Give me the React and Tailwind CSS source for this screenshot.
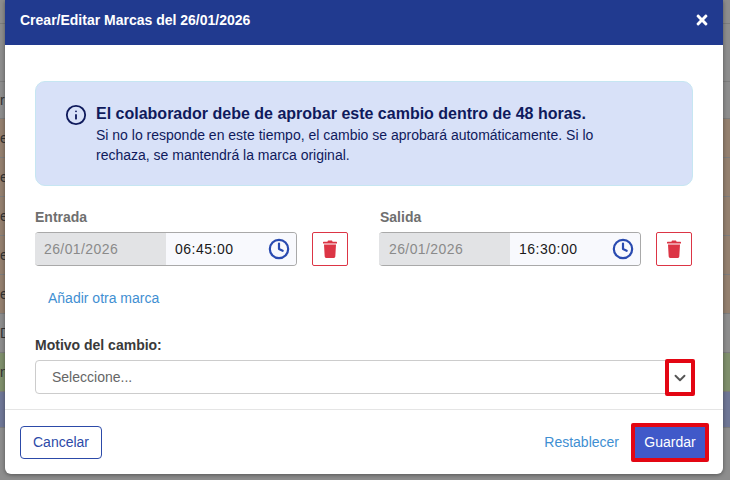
import React from 'react';
import { Clock, Info, ChevronDown } from 'lucide-react';
import { FaTimes } from 'react-icons/fa';

const filas = [
  { h: 'h-[24px]', bg: 'bg-[#8d8d8d]', txt: '' },
  { h: 'h-[58px]', bg: 'bg-[#8d8d8d]', txt: '' },
  { h: 'h-[37px]', bg: 'bg-[#8d8d8d]', txt: 're' },
  { h: 'h-[39px]', bg: 'bg-[#94806f]', txt: 'e' },
  { h: 'h-[39px]', bg: 'bg-[#94806f]', txt: 'e' },
  { h: 'h-[39px]', bg: 'bg-[#94806f]', txt: 'e' },
  { h: 'h-[39px]', bg: 'bg-[#94806f]', txt: 'e' },
  { h: 'h-[39px]', bg: 'bg-[#94806f]', txt: 'e' },
  { h: 'h-[39px]', bg: 'bg-[#8d8d8d]', txt: 'D' },
  { h: 'h-[39px]', bg: 'bg-[#7f8f6c]', txt: 'n' },
  { h: 'h-[36px]', bg: 'bg-[#6f7796]', txt: '' },
];

// papelera maciza, sin las rayas del icono de fontawesome
const Papelera = () => (
  <svg width="14" height="18" viewBox="0 0 14 18" fill="currentColor">
    <path d="M5 0.5h4l0.6 1.2H13.4a0.6 0.6 0 0 1 0.6 0.6V3.6H0V2.3a0.6 0.6 0 0 1 0.6-0.6H4.4z" />
    <path d="M1 4.6h12L12.3 16.6a1.4 1.4 0 0 1-1.4 1.3H3.1a1.4 1.4 0 0 1-1.4-1.3z" />
  </svg>
);

const CampoMarca = ({ etiqueta, hora, sangria }) => (
  <div className="flex flex-col w-[313px]">
    <label className={`${sangria ? 'ml-[1px]' : ''} text-[14px] leading-[16px] font-bold text-[#6f6f6f] mb-[7px]`}>{etiqueta}</label>
    <div className="flex items-center">
      <div className="flex w-[262px] h-[34px] rounded-[4px] border border-[#a9a9a9] border-l-0 overflow-hidden">
        <div className={`${sangria ? 'pl-[10px]' : 'pl-[9px]'} w-[131px] bg-[#e2e3e5] flex items-center text-[14px] tracking-[0.4px] text-[#8a8a8a]`}>26/01/2026</div>
        <div className="flex-1 bg-[#f8f9fd] pl-[9px] pr-[6px] flex items-center justify-between text-[14px] tracking-[0.5px] text-[#1a1a1a]">
          {hora}
          <Clock size={22} strokeWidth={2.4} className="text-[#2a4bb0]" />
        </div>
      </div>
      <button className="ml-[15px] w-[36px] h-[34px] flex items-center justify-center border border-[#dc3545] rounded-[2px] bg-white text-[#dc3545]">
        <Papelera />
      </button>
    </div>
  </div>
);

export default function App() {
  return (
    <div className="relative w-[730px] h-[480px] overflow-hidden bg-[#8d8d8d] font-['Liberation_Sans',Arial,sans-serif]">
      {/* tabla de fondo */}
      <div className="flex flex-col">
        {filas.map((f, i) => (
          <div key={i} className={`${f.h} ${f.bg} border-b border-[#7d7d7d] text-[14px] text-[#333] flex items-center`}>
            {f.txt}
          </div>
        ))}
      </div>

      {/* modal */}
      <div className="absolute left-[5px] top-0 w-[718px] h-[474px] bg-white rounded-b-[6px] flex flex-col shadow-[0_1px_4px_rgba(0,0,0,0.4)]">
        <div className="h-[45px] bg-[#213a8f] flex items-center justify-between pl-[15px] pr-[13px] pb-[4px] shrink-0">
          <h1 className="text-[14px] font-bold text-white">Crear/Editar Marcas del 26/01/2026</h1>
          <FaTimes size={16} className="text-white mb-[1px]" />
        </div>

        <div className="flex-1 px-[30px] pt-[36px]">
          <div className="h-[105px] w-[658px] bg-[#d8e1f8] border border-[#c6e6f2] rounded-[10px] flex pl-[29px] pt-[22px] gap-[9px] text-[#0f1a5c]">
            <Info size={22} strokeWidth={2} className="shrink-0" />
            <div>
              <p className="text-[16px] leading-[20px] font-bold">El colaborador debe de aprobar este cambio dentro de 48 horas.</p>
              <p className="text-[14px] leading-[20px] w-[530px] mt-[1px]">
                Si no lo responde en este tiempo, el cambio se aprobará automáticamente. Si lo rechaza, se mantendrá la marca original.
              </p>
            </div>
          </div>

          <div className="flex mt-[23px] gap-[31px]">
            <CampoMarca etiqueta="Entrada" hora="06:45:00" />
            <CampoMarca etiqueta="Salida" hora="16:30:00" sangria />
          </div>

          <a className="block mt-[24px] ml-[13px] text-[14px] leading-[16px] text-[#3f8fd2]">Añadir otra marca</a>

          <label className="block mt-[31px] text-[14px] leading-[16px] font-bold text-[#3a3a3a]">Motivo del cambio:</label>
          <div className="relative mt-[7px] h-[34px] w-[660px] border border-[#cccccc] rounded-[4px] flex items-center pl-[16px] text-[14px] text-[#666666]">
            Seleccione...
            <div className="absolute right-[-1px] top-[-2px] w-[30px] h-[37px] border-[4px] border-[#e30613] rounded-[2px] flex items-center justify-center bg-white">
              <ChevronDown size={18} strokeWidth={2.5} className="text-[#555555]" />
            </div>
          </div>
        </div>

        <div className="h-[65px] border-t border-[#e5e5e5] flex items-center justify-between pl-[15px] pr-[14px] shrink-0">
          <button className="w-[82px] h-[33px] border border-[#2c4aa8] rounded-[4px] text-[14px] text-[#2c4aa8] bg-white">Cancelar</button>
          <div className="flex items-center gap-[12px]">
            <span className="text-[14px] text-[#3f8fd2]">Restablecer</span>
            <button className="w-[78px] h-[39px] border-[4px] border-[#e30613] rounded-[2px] bg-[#4059c9] text-[14px] text-white">Guardar</button>
          </div>
        </div>
      </div>
    </div>
  );
}
